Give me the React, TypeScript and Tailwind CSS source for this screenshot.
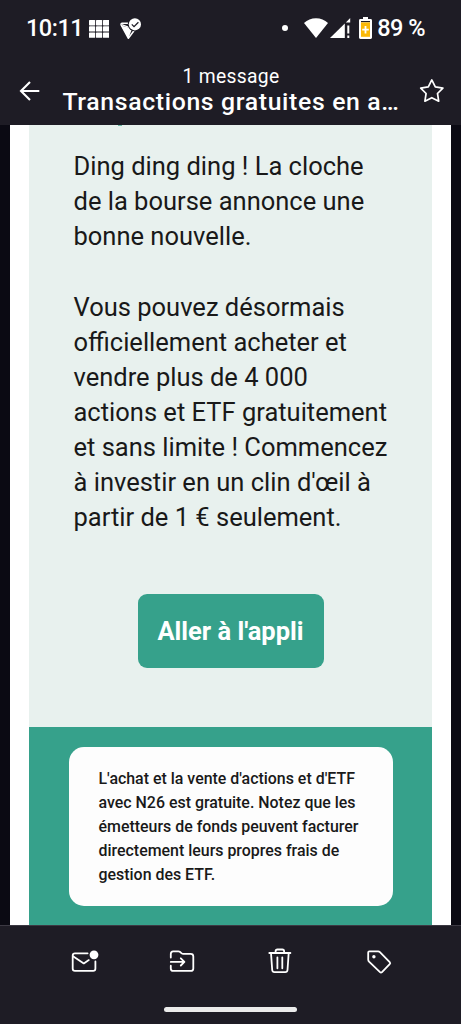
import type { ReactNode } from "react";

const messageLines = [
  "Ding ding ding ! La cloche",
  "de la bourse annonce une",
  "bonne nouvelle.",
  "",
  "Vous pouvez désormais",
  "officiellement acheter et",
  "vendre plus de 4 000",
  "actions et ETF gratuitement",
  "et sans limite ! Commencez",
  "à investir en un clin d'œil à",
  "partir de 1 € seulement.",
];

const noticeLines = [
  "L'achat et la vente d'actions et d'ETF",
  "avec N26 est gratuite. Notez que les",
  "émetteurs de fonds peuvent facturer",
  "directement leurs propres frais de",
  "gestion des ETF.",
];

function StatusBar() {
  return (
    <div className="flex h-14 items-center pl-[26px] pr-[36px] text-[23.5px] font-medium leading-none tracking-[-0.5px]">
      <span className="w-[57px] whitespace-nowrap pt-[2px]">10:11</span>
      {/* app grid */}
      <svg className="ml-[6px] mt-[1px] shrink-0" width="20" height="18" viewBox="0 0 20 18" fill="#fff">
        {[0, 6.2, 12.4].map((y) =>
          [0, 7, 14].map((x) => <rect key={`${x}-${y}`} x={x} y={y} width="6.2" height="5.4" rx="0.6" />)
        )}
      </svg>
      {/* pointer with check */}
      <svg className="ml-[11px] mt-[1px] shrink-0" width="22" height="22" viewBox="0 0 22 22" fill="none">
        <path d="M1 7.5 8.5 9.6 11.6 12 8.4 20.3Z" fill="#fff" />
        <path d="M8 5.2H2.2Q0.8 5.3 1.1 7L8.4 20.3 14.7 11.8" stroke="#fff" strokeWidth="1.5" strokeLinejoin="round" />
        <path d="M1.6 6.6 9 9.4" stroke="#fff" strokeWidth="1.2" />
        <circle cx="14.9" cy="6.3" r="7.1" fill="#1e1c25" />
        <circle cx="14.9" cy="6.3" r="6.1" fill="#fff" />
        <path d="m11.8 6.4 2.2 2.2 4.4-4.4" stroke="#1e1c25" strokeWidth="1.3" />
      </svg>
      <span className="ml-auto h-[6px] w-[6px] shrink-0 rounded-full bg-white" />
      {/* wifi */}
      <svg className="ml-[16px] shrink-0" width="24" height="20" viewBox="0 0 24 20" fill="#fff">
        <path d="M0 5.1Q5 .3 12 .3T24 5.1L12 20Z" />
      </svg>
      {/* mobile signal */}
      <svg className="ml-[2px] shrink-0" width="21" height="20" viewBox="0 0 21 20" fill="#fff">
        <path d="M0 20 14.8 5.4V20Z" />
        <path d="M15.8 4.4 20.2 0V4.4ZM17.3 7.5h2v8h-2ZM17.3 17.6h2V20h-2Z" />
      </svg>
      {/* battery */}
      <svg className="ml-[8px] shrink-0" width="13" height="22" viewBox="0 0 13 22">
        <path d="M4 0h5v2h2.6Q13 2 13 3.4V20.6Q13 22 11.6 22H1.4Q0 22 0 20.6V3.4Q0 2 1.4 2H4Z" fill="#fff" />
        <path d="M2 4h9v1.2H2Z" fill="#1e1c25" />
        <path d="M2 5.4h9V19.8H2Z" fill="#fbb908" />
        <path d="M5.6 9h1.8v2.8h2.4v1.8H7.4v2.8H5.6v-2.8H3.2v-1.8h2.4Z" fill="#fff" />
      </svg>
      <span className="ml-[5px] whitespace-nowrap pt-[2px]">89 %</span>
    </div>
  );
}

function Header() {
  return (
    <div className="flex h-[69px] pt-2">
      <div className="flex w-[60px] justify-end pr-[20px] pt-[17px]">
        <svg width="21" height="20" viewBox="0 0 21 20" fill="none" stroke="#fff" strokeWidth="2.1">
          <path d="M20.3 10H1.8M11 1.1 2 10l9 8.9" />
        </svg>
      </div>
      <div className="flex w-[342px] flex-col items-center whitespace-nowrap">
        <span className="h-[25px] text-[19.3px] leading-[26px] tracking-[0.3px]">1 message</span>
        <span className="h-[30px] text-[24.8px] font-medium leading-[26px] tracking-[0.65px]">
          Transactions gratuites en a…
        </span>
      </div>
      <svg className="ml-[16px] mt-[14px]" width="28" height="27" viewBox="0 0 28 27" fill="none" stroke="#fff" strokeWidth="1.7" strokeLinejoin="round">
        <path d="m13.8 1.9 3.5 7 7.6 1.2-5.4 5.4 1.2 7.7-6.9-3.5-6.9 3.5 1.2-7.7-5.4-5.4 7.6-1.2Z" />
      </svg>
    </div>
  );
}

function ToolIcon({ children }: { children: ReactNode }) {
  return (
    <svg width="28" height="28" viewBox="0 0 28 28" fill="none" stroke="#fff" strokeWidth="1.8" strokeLinecap="round" strokeLinejoin="round">
      {children}
    </svg>
  );
}

function Toolbar() {
  return (
    <div className="h-[99px] border-t border-[#3c3943] bg-[#1e1c25]">
      <div className="flex justify-between pl-[71px] pr-[68px] pt-[22px]">
        <ToolIcon>
          <path d="M16.6 5.3H4Q1.7 5.3 1.7 7.6V20.5Q1.7 22.9 4 22.9H22.1Q24.4 22.9 24.4 20.5V13.5" />
          <path d="m2 8.2 10.8 7.2 5-3.3" />
          <circle cx="23" cy="6.8" r="4.4" fill="#fff" stroke="none" />
        </ToolIcon>
        <ToolIcon>
          <path d="M1.8 9.5V6Q1.8 3.3 4.2 3.3H9.4Q10.2 3.3 10.8 3.8L12.7 5.4Q13.3 5.9 14.2 5.9H21.7Q24.3 5.9 24.3 8.4V20.4Q24.3 22.9 21.7 22.9H4.2Q1.8 22.9 1.8 20.4V17.7" />
          <path d="M1.8 13.9H15.1M11.8 10.3l3.6 3.6-3.6 3.6" />
        </ToolIcon>
        <ToolIcon>
          <path d="M2.3 5H23.4M4 5 5.2 22Q5.4 24.1 7.5 24.1H18.2Q20.3 24.1 20.5 22L21.7 5" />
          <path d="M8.6 4.8V3.2Q8.6 1.5 10.4 1.5H15.3Q17.1 1.5 17.1 3.2V4.8M10.4 9.3V20.3M15.3 9.3V20.3" />
        </ToolIcon>
        <ToolIcon>
          <path d="M4.3 3.4H13.1Q14.2 3.4 14.9 4.1L24.7 14.1Q25.7 15.2 24.7 16.2L17 24.1Q16 25.1 15 24.1L4.3 13.9Q3.2 12.8 3.2 11.4V4.5Q3.2 3.4 4.3 3.4Z" />
          <circle cx="8.9" cy="8.8" r="1.7" fill="#fff" stroke="none" />
        </ToolIcon>
      </div>
      <div className="mx-auto mt-[31px] h-[5px] w-[133px] rounded-full bg-[#ebebeb]" />
    </div>
  );
}

export default function App() {
  return (
    <div className="flex h-[1024px] w-[461px] flex-col overflow-hidden bg-[#1e1c25] font-['Roboto',sans-serif] text-white">
      <StatusBar />
      <Header />

      {/* Email body */}
      <main className="flex h-[800px] flex-none bg-[#0b0a13] px-[10px] text-[#191919]">
        <div className="flex w-[441px] flex-col bg-white px-[19px]">
          <section className="flex h-[602px] flex-none flex-col bg-[#e8f1ee] pl-[44.5px]">
            {/* tail of the heading scrolled under the header */}
            <div className="ml-[44px] h-px w-[4px] bg-[#6ab7a3]" />
            <p className="mt-[23.3px] whitespace-nowrap text-[25.5px] leading-[35.08px]">
              {messageLines.map((line, index) => (
                <span key={index} className="block h-[35.08px]">
                  {line}
                </span>
              ))}
            </p>
            <button className="ml-[64px] mt-[58.8px] h-[74px] w-[186px] rounded-[9px] bg-[#36a18b] pt-px text-[25.5px] font-bold text-white">
              Aller à l'appli
            </button>
          </section>

          <section className="flex-1 bg-[#36a18b] pl-[39.5px] pt-[20px]">
            <div className="h-[159px] w-[324px] rounded-[15px] bg-[#fdfdfd] pl-[30px] pt-[19.5px]">
              <p className="whitespace-nowrap text-[15.93px] font-medium leading-[24px]">
                {noticeLines.map((line) => (
                  <span key={line} className="block">
                    {line}
                  </span>
                ))}
              </p>
            </div>
          </section>
        </div>
      </main>

      <Toolbar />
    </div>
  );
}
